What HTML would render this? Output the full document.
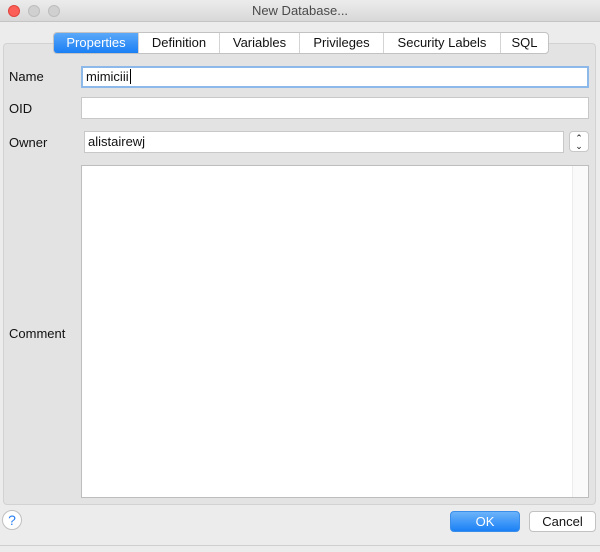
<!DOCTYPE html>
<html><head><style>
*{box-sizing:border-box;margin:0;padding:0}
body{width:600px;height:552px;background:#ececec;font-family:"Liberation Sans",sans-serif;font-size:13px;color:#111;position:relative;overflow:hidden}
.abs{position:absolute}
.title{left:0;top:0;width:600px;height:22px;background:linear-gradient(#ececec,#d8d8d8);border-bottom:1px solid #c4c4c4;text-align:center;line-height:22px;color:#4a4a4a;font-size:13px}
.dot{top:5px;width:12px;height:12px;border-radius:50%;background:#d0d0d0;border:1px solid #bdbdbd}
.panel{left:3px;top:43px;width:593px;height:462px;background:#e3e3e3;border:1px solid #d2d2d2;border-radius:4px}
.tabs{left:53px;top:32px;height:22px;width:496px;display:flex;border:1px solid #c2c2c2;border-radius:4px;background:#fff;overflow:hidden}
.tabs div{line-height:20px;border-right:1px solid #d4d4d4;font-size:13px;text-align:center}
.tabs div:last-child{border-right:none}
.tabs .on{background:linear-gradient(#5aa8f8,#1a7ff5);color:#fff}
.lbl{left:9px;font-size:13px}
.fld{background:#fff;border:1px solid #c8c8c8;height:22px;line-height:20px;padding-left:3px}
.btn{height:21px;border-radius:4px;text-align:center;line-height:20px}
</style></head><body>
<div class="abs title">New Database...</div>
<div class="abs dot" style="left:8px;background:#fc5f57;border-color:#e0443e"></div>
<div class="abs dot" style="left:28px"></div>
<div class="abs dot" style="left:48px"></div>
<div class="abs panel"></div>
<div class="abs tabs"><div class="on" style="width:85px">Properties</div><div style="width:81px">Definition</div><div style="width:80px">Variables</div><div style="width:84px">Privileges</div><div style="width:117px">Security Labels</div><div style="width:47px">SQL</div></div>
<div class="abs lbl" style="top:69px">Name</div>
<div class="abs fld" style="left:81px;top:66px;width:508px;border:2px solid #8cb8ea;line-height:18px">mimiciii<span style="border-left:1px solid #000;margin-left:1px"></span></div>
<div class="abs lbl" style="top:101px">OID</div>
<div class="abs fld" style="left:81px;top:97px;width:508px"></div>
<div class="abs lbl" style="top:135px">Owner</div>
<div class="abs fld" style="left:84px;top:131px;width:480px">alistairewj</div>
<div class="abs" style="left:569px;top:131px;width:20px;height:21px;background:#fff;border:1px solid #c8c8c8;border-radius:4px;font-size:9px;line-height:8px;text-align:center;padding-top:2px">⌃<br>⌄</div>
<div class="abs lbl" style="top:326px">Comment</div>
<div class="abs" style="left:81px;top:165px;width:508px;height:333px;background:#fff;border:1px solid #bdbdbd"><div class="abs" style="right:0;top:0;width:16px;height:100%;background:#fafafa;border-left:1px solid #ececec"></div></div>
<div class="abs" style="left:2px;top:510px;width:20px;height:20px;border-radius:50%;background:#fff;border:1px solid #c0c0c0;color:#2a7ff0;text-align:center;line-height:18px;font-size:14px">?</div>
<div class="abs btn" style="left:450px;top:511px;width:70px;background:linear-gradient(#6cb3fa,#1b80f5);color:#fff;border:1px solid #3a8de8">OK</div>
<div class="abs btn" style="left:529px;top:511px;width:67px;background:#fff;border:1px solid #c2c2c2">Cancel</div>
<div class="abs" style="left:0;top:545px;width:600px;height:1px;background:#cfcfcf"></div>
</body></html>
